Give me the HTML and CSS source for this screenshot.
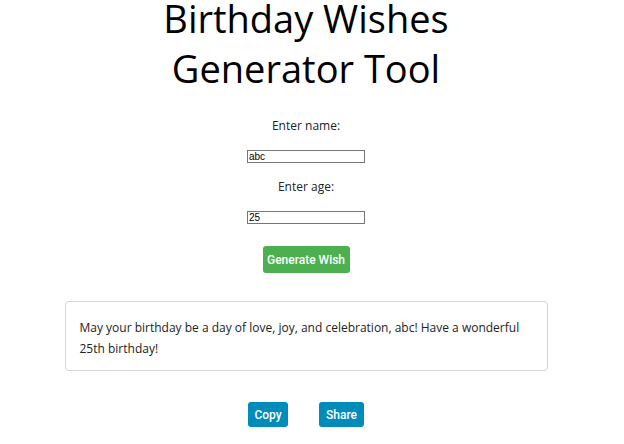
FILE: index.html
```html
<!DOCTYPE html>
<html>
<head>
<meta charset="utf-8">
<link rel="stylesheet" href="styles.css">
</head>
<body>
<div class="page">
  <h1 class="title"><span class="title-line">Birthday Wishes</span> <span class="title-line title-line-2">Generator Tool</span></h1>
  <label class="label" for="name">Enter name:</label>
  <input class="field" id="name" type="text" value="abc">
  <label class="label label-age" for="age">Enter age:</label>
  <input class="field" id="age" type="text" value="25">
  <button class="btn btn-generate">Generate Wish</button>
  <div class="wish">May your birthday be a day of love, joy, and celebration, abc! Have a wonderful 25th birthday!</div>
  <div class="actions">
    <button class="btn btn-action btn-copy">Copy</button>
    <button class="btn btn-action btn-share">Share</button>
  </div>
</div>
</body>
</html>
```
FILE: styles.css
```css
html, body {
  margin: 0;
  padding: 0;
  background: #fff;
}
body {
  font-family: "Open Sans", "Noto Sans", sans-serif;
  color: #111;
}
.page {
  width: 612px;
  display: flex;
  flex-direction: column;
  align-items: center;
}
.title {
  margin: 0;
  font-size: 38px;
  line-height: 36px;
  font-weight: 400;
  text-align: center;
  color: #000;
}
.title-line {
  display: block;
}
.title-line-2 {
  margin-top: 14px;
}
.label {
  margin-top: 32px;
  font-size: 12px;
  line-height: 16px;
  color: #222;
}
.label-age {
  margin-top: 16px;
}
.field {
  margin-top: 16px;
  width: 118px;
  height: 13px;
  box-sizing: border-box;
  border: 1px solid #767676;
  padding: 0 1px;
  font-family: "Liberation Sans", Arial, sans-serif;
  font-size: 10px;
  line-height: 11px;
  color: #000;
  outline: none;
}
.btn {
  border: none;
  border-radius: 3px;
  color: #fff;
  font-family: Roboto, "Liberation Sans", Arial, sans-serif;
  font-size: 12px;
  font-weight: 500;
  height: 27px;
  padding: 0;
  cursor: pointer;
}
.btn-generate {
  margin-top: 22px;
  width: 87px;
  background: #4caf50;
}
.wish {
  margin-top: 28px;
  width: 483px;
  height: 70px;
  box-sizing: border-box;
  border: 1px solid #d6d6d6;
  border-radius: 4px;
  padding: 15px 14px 0;
  font-size: 12px;
  line-height: 21px;
  color: #222;
}
.actions {
  margin-top: 31px;
  display: flex;
  gap: 31px;
}
.btn-action {
  background: #008cba;
  height: 25px;
}
.btn-copy {
  width: 40px;
}
.btn-share {
  width: 45px;
}
```
